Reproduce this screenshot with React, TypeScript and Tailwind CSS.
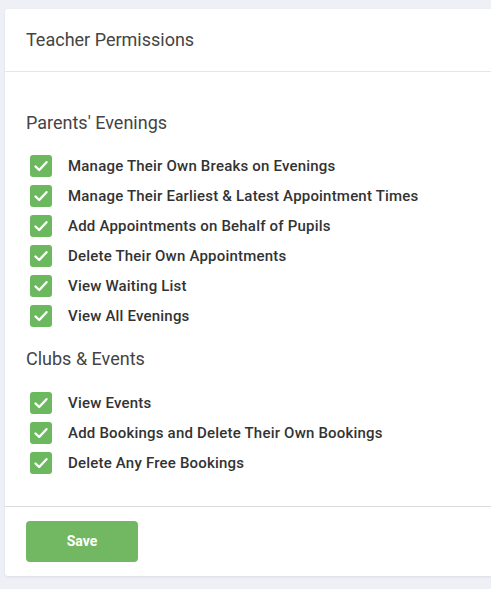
const parentsEvenings = [
  "Manage Their Own Breaks on Evenings",
  "Manage Their Earliest & Latest Appointment Times",
  "Add Appointments on Behalf of Pupils",
  "Delete Their Own Appointments",
  "View Waiting List",
  "View All Evenings",
];

const clubsEvents = [
  "View Events",
  "Add Bookings and Delete Their Own Bookings",
  "Delete Any Free Bookings",
];

const Check = () => (
  <span className="flex h-[22px] w-[22px] shrink-0 items-center justify-center rounded-[3px] bg-[#6cb85e]">
    <svg width="16" height="16" viewBox="0 0 16 16" fill="none">
      <path d="M2.5 8.5 L6.2 12 L13.5 4.2" stroke="white" strokeWidth="2.4" strokeLinecap="round" strokeLinejoin="round" />
    </svg>
  </span>
);

const PermissionRow = ({ label }: { label: string }) => (
  <label className="flex h-[30px] items-center gap-4 pl-1">
    <Check />
    <span className="text-[15px] font-medium tracking-[0.2px] text-[#333]">{label}</span>
  </label>
);

export default function App() {
  return (
    <div className="min-h-[589px] overflow-hidden bg-[#eef0f5] pl-[5px] pt-[9px]" style={{ fontFamily: "Roboto, 'Liberation Sans', sans-serif" }}>
      <div className="w-[520px] rounded-l-[3px] bg-white shadow-[0_1px_3px_rgba(0,0,0,0.08)]">
        <div className="flex h-[63px] items-center border-b border-[#e6e6e6] px-[21px]">
          <h1 className="-mt-0.5 text-[18px] text-[#444]">Teacher Permissions</h1>
        </div>

        <div className="px-[21px] pt-[39px] pb-[28px]">
          <h2 className="text-[18px] leading-6 text-[#444]">Parents' Evenings</h2>
          <div className="mt-4">
            {parentsEvenings.map((p) => (
              <PermissionRow key={p} label={p} />
            ))}
          </div>

          <h2 className="mt-4 text-[18px] leading-6 text-[#444]">Clubs &amp; Events</h2>
          <div className="mt-[17px]">
            {clubsEvents.map((p) => (
              <PermissionRow key={p} label={p} />
            ))}
          </div>
        </div>

        <div className="border-t border-[#dcdcdc] px-[21px] pt-[14px] pb-[14px]">
          <button className="h-[41px] w-[112px] rounded-[4px] bg-[#72b862] text-[14px] font-bold text-white">
            Save
          </button>
        </div>
      </div>
    </div>
  );
}
